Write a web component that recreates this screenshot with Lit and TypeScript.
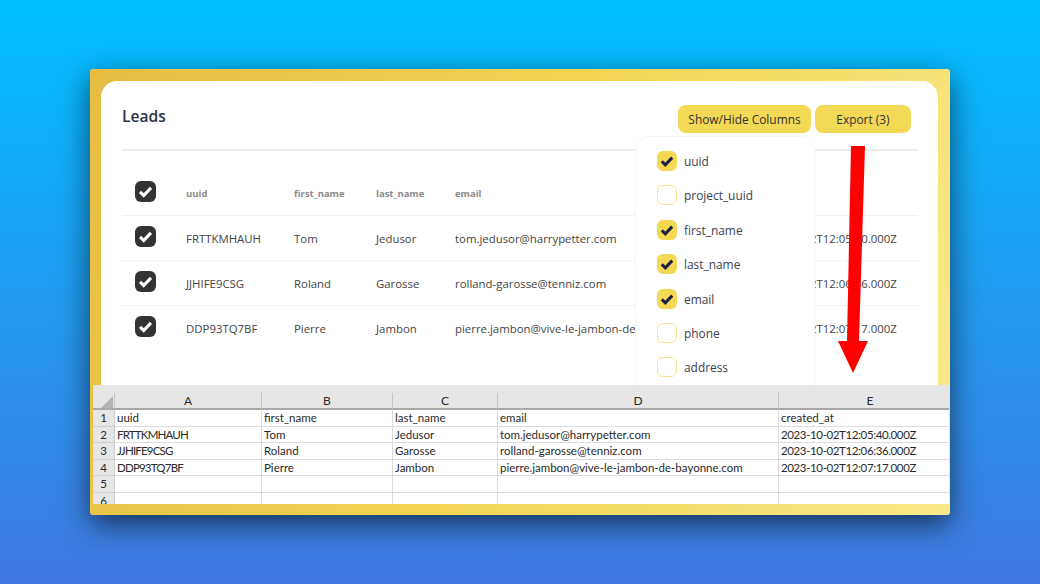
import { LitElement, html, css, svg } from "lit";
import { customElement } from "lit/decorators.js";

const COLS = ["uuid", "first_name", "last_name", "email", "created_at"];
const ROWS = [
  ["FRTTKMHAUH", "Tom", "Jedusor", "tom.jedusor@harrypetter.com", "2023-10-02T12:05:40.000Z"],
  ["JJHIFE9CSG", "Roland", "Garosse", "rolland-garosse@tenniz.com", "2023-10-02T12:06:36.000Z"],
  ["DDP93TQ7BF", "Pierre", "Jambon", "pierre.jambon@vive-le-jambon-de-bayonne.com", "2023-10-02T12:07:17.000Z"],
];
const OPTIONS: [string, boolean][] = [
  ["uuid", true], ["project_uuid", false], ["first_name", true], ["last_name", true],
  ["email", true], ["phone", false], ["address", false],
];
const tick = (color: string) => svg`<svg viewBox="0 0 20 20" width="100%" height="100%"><path d="M4.8 10.4 8.3 13.8 15.2 6.6" fill="none" stroke="${color}" stroke-width="3"/></svg>`;

@customElement("app-root")
export class AppRoot extends LitElement {
  static styles = css`
    :host { display: block; width: 1040px; height: 584px; overflow: hidden; position: relative;
      background: linear-gradient(180deg, #00bfff 0%, #4179e0 100%);
      font-family: "Open Sans", "Noto Sans", sans-serif; color: #333; }
    .wrap { display: flex; flex-direction: column; padding: 69px 90px 0; }
    .frame { height: 446px; box-sizing: border-box; padding: 12px 12px 11px 11px; border-radius: 3px;
      display: flex; flex-direction: column; position: relative;
      background: linear-gradient(110deg, #e6bd42 0%, #f2d554 50%, #fbe98a 100%);
      box-shadow: 0 10px 30px rgba(0, 0, 0, .6); }
    .card { height: 304px; flex: none; background: #fff; border-radius: 16px 16px 0 0; overflow: hidden;
      box-sizing: border-box; padding: 0 20px 0 21px; position: relative; }
    .top { display: flex; align-items: flex-start; height: 70px; box-sizing: border-box; border-bottom: 2px solid #eeeeee; }
    h1 { margin: 20px 0 0; font-size: 15.6px; font-weight: 600; line-height: 30px; color: #2d3446; flex: 1; }
    .btns { display: flex; gap: 4px; margin: 24px 7px 0 0; }
    .btn { height: 28px; border-radius: 8px; background: #f3d955; display: flex; align-items: center; justify-content: center;
      font-size: 11.9px; font-weight: 500; color: #333; }
    .b1 { width: 133px; } .b2 { width: 96px; }
    .row { display: grid; grid-template-columns: 64px 108px 82px 79px 302px 1fr; align-items: center; height: 45px; box-sizing: border-box;
      border-bottom: 1px solid #f1f1f1; font-size: 11.4px; color: #444; white-space: nowrap; }
    .head { height: 65px; font-size: 9.5px; font-weight: 700; color: #8a8a8a; padding-top: 20px; }
    .row.last { border-bottom: none; }
    .box { width: 21px; height: 21px; margin-left: 13px; background: #333; border-radius: 6px; display: flex; margin-top: -4px; }
    .menu { position: absolute; left: 534px; top: 55px; width: 180px; height: 260px; box-sizing: border-box; background: #fff;
      border: 1px solid #f5f5f5; border-radius: 14px; padding: 14px 20px 14px 21px; display: flex; flex-direction: column; gap: 14.4px; }
    .opt { display: flex; align-items: center; gap: 7px; height: 20px; font-size: 11.9px; font-weight: 500; color: #3d4152; }
    .cb { width: 20px; height: 20px; border-radius: 6px; box-sizing: border-box; flex: none; }
    .cb.on { background: #f5d955; }
    .cb.off { border: 1px solid #f8e38f; background: #fff; }
    .sheet { flex: 1; margin-left: -8px; margin-right: -11px; background: #fff; overflow: hidden; display: flex; flex-direction: column;
      font-family: Lato, "Open Sans", sans-serif; font-size: 11.5px; color: #2a2a2a; }
    .band { height: 8px; background: #e6e6e6; flex: none; }
    .sr { display: grid; grid-template-columns: 22px 147px 131px 105px 281px 183px; height: 16.5px; flex: none; }
    .sr > div { box-sizing: border-box; border-right: 1px solid #dcdcdc; border-bottom: 1px solid #dcdcdc; padding-left: 2px;
      line-height: 16px; white-space: nowrap; overflow: hidden; }
    .sr .n { background: #e6e6e6; text-align: center; padding: 0; border-color: #cfcfcf; }
    .sr .tight { letter-spacing: -0.8px; }
    .sr .date { letter-spacing: -0.38px; }
    .hdr { height: 17px; }
    .hdr > div { background: #e6e6e6; text-align: center; border-bottom: 2px solid #a8a8a8; border-right-color: #c4c4c4; padding: 0; font-size: 12px; }
    .corner { position: relative; }
    .corner svg { position: absolute; left: 7px; top: 2px; }
    .arrow { position: absolute; left: 0; top: 0; pointer-events: none; }
  `;

  render() {
    return html`
      <div class="wrap">
        <div class="frame">
          <div class="card">
            <div class="top">
              <h1>Leads</h1>
              <div class="btns"><div class="btn b1">Show/Hide Columns</div><div class="btn b2">Export (3)</div></div>
            </div>
            <div class="row head">
              <div class="box">${tick("#fff")}</div>
              ${COLS.map((c, i) => html`<div>${i === 4 ? "" : c}</div>`)}
            </div>
            ${ROWS.map((r, i) => html`<div class="row ${i === 2 ? "last" : ""}">
              <div class="box">${tick("#fff")}</div>
              ${r.map((v) => html`<div>${v}</div>`)}
            </div>`)}
            <div class="menu">
              ${OPTIONS.map(([n, on]) => html`<div class="opt">
                <div class="cb ${on ? "on" : "off"}">${on ? tick("#1e2040") : ""}</div>${n}
              </div>`)}
            </div>
          </div>
          <div class="sheet">
            <div class="band"></div>
            <div class="sr hdr">
              <div class="corner"><svg width="13" height="13"><path d="M13 1V13H1Z" fill="#b4b4b4"/></svg></div>
              ${["A", "B", "C", "D", "E"].map((c) => html`<div>${c}</div>`)}
            </div>
            <div class="sr"><div class="n">1</div>${COLS.map((c) => html`<div>${c}</div>`)}</div>
            ${ROWS.map((r, i) => html`<div class="sr"><div class="n">${i + 2}</div>${r.map((v, j) => html`<div class="${j === 0 ? "tight" : j === 4 ? "date" : ""}">${v}</div>`)}</div>`)}
            ${[5, 6].map((n) => html`<div class="sr"><div class="n">${n}</div>${[0, 1, 2, 3, 4].map(() => html`<div></div>`)}</div>`)}
          </div>
        </div>
      </div>
      <svg class="arrow" width="1040" height="584"><path d="M851 146H865L859 341H868L853 373L838 341H847Z" fill="#ff0000"/></svg>
    `;
  }
}
